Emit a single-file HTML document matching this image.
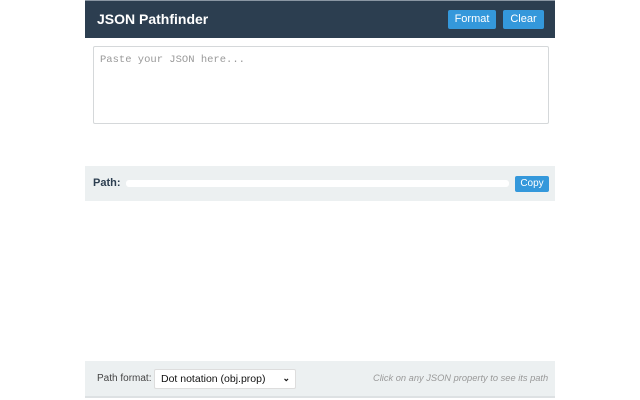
<!DOCTYPE html><html><head><style>
body{margin:0;width:640px;height:400px;background:#fff;position:relative;font-family:"Liberation Sans",sans-serif;overflow:hidden}
div,span{position:absolute;box-sizing:border-box;white-space:nowrap}
.btn{background:#3498db;color:#fff;font-size:11px;border-radius:2px;text-align:center}
</style></head><body>
<div style="left:85px;top:0;width:470px;height:38px;background:#2c3e50;border-top:1px solid #8a96a3"></div>
<span style="left:97px;top:11px;color:#fff;font-size:14px;font-weight:bold">JSON Pathfinder</span>
<div class="btn" style="left:448px;top:10px;width:48px;height:19px;line-height:19px">Format</div>
<div class="btn" style="left:503px;top:10px;width:41px;height:19px;line-height:19px">Clear</div>
<div style="left:93px;top:46px;width:456px;height:78px;border:1px solid #d5d8da;border-radius:2px"></div>
<span style="left:100px;top:54px;color:#999;font-size:10.5px;font-family:'Liberation Mono',monospace">Paste your JSON here...</span>
<div style="left:85px;top:166px;width:470px;height:35px;background:#ecf0f1"></div>
<span style="left:93px;top:177px;font-size:11px;font-weight:bold;color:#2c3e50">Path:</span>
<div style="left:126px;top:180px;width:383px;height:7px;background:#fff;border-radius:3px"></div>
<div class="btn" style="left:515px;top:176px;width:34px;height:16px;line-height:16px;font-size:10px">Copy</div>
<div style="left:85px;top:361px;width:470px;height:37px;background:#ecf0f1;border-bottom:2px solid #dde1e3"></div>
<span style="left:97px;top:373px;font-size:10px;color:#444">Path format:</span>
<div style="left:154px;top:369px;width:142px;height:20px;background:#fff;border:1px solid #ddd;border-radius:2px;font-size:10.5px;line-height:19px;padding-left:6px;color:#111">Dot notation (obj.prop)<span style="right:5px;top:-1px;font-size:9px;font-weight:bold">&#8964;</span></div>
<span style="left:373px;top:373px;font-size:9.3px;color:#999;font-style:italic">Click on any JSON property to see its path</span>
</body></html>
